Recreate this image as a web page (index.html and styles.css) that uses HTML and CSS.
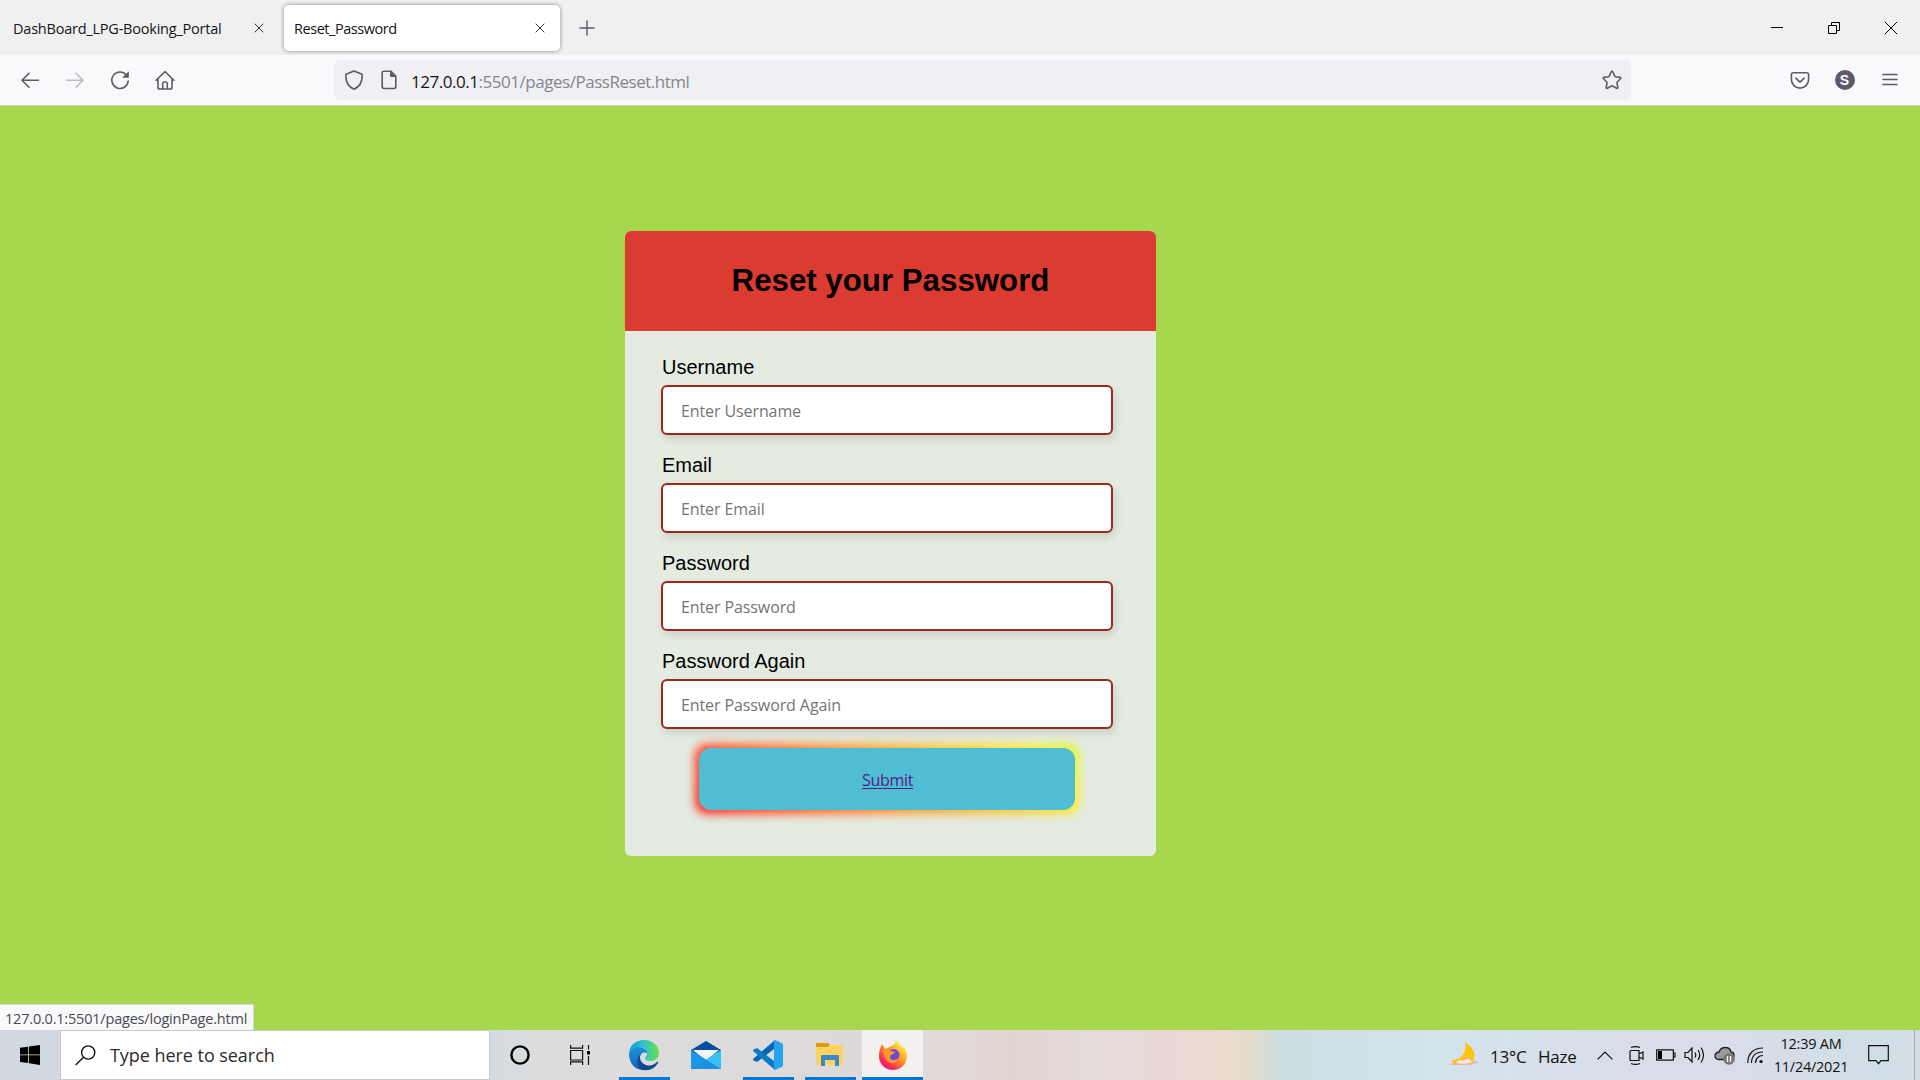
FILE: index.html
```html
<!DOCTYPE html>
<html lang="en">
<head>
<meta charset="utf-8">
<title>Reset_Password</title>
<link rel="stylesheet" href="styles.css">
</head>
<body>
<header class="tabs">
  <div class="tab"><span class="tab-title t1">DashBoard_LPG-Booking_Portal</span><svg class="x" viewBox="0 0 10 10"><path d="M.7.7l8.6 8.6M9.3.7L.7 9.3"/></svg></div>
  <div class="tab active"><span class="tab-title t2">Reset_Password</span><svg class="x" viewBox="0 0 10 10"><path d="M.7.7l8.6 8.6M9.3.7L.7 9.3"/></svg></div>
  <svg class="plus" viewBox="0 0 16 16"><path d="M8 .5v15M.5 8h15"/></svg>
  <div class="window-buttons">
    <svg viewBox="0 0 14 14"><path d="M1 6.500h12"/></svg>
    <svg viewBox="0 0 14 14"><path d="M1.500 4.500h8v8h-8zM4.500 4.500v-3h8v8h-3"/></svg>
    <svg viewBox="0 0 14 14"><path d="M.8.8l12.400 12.400M13.200.8L.8 13.200"/></svg>
  </div>
</header>
<nav class="toolbar">
  <div class="nav-buttons">
    <svg viewBox="0 0 20 20"><path d="M18.500 10.300H2M9 3.300l-7 7 7 7"/></svg>
    <svg class="off" viewBox="0 0 20 20"><path d="M1.500 10.300H18M11 3.300l7 7-7 7"/></svg>
    <svg viewBox="0 0 20 20"><path d="M16.500 5.200A8.200 8.200 0 1 0 18.200 11"/><path class="fill" d="M18.800 1.200v6.600h-6.600z"/></svg>
    <svg viewBox="0 0 20 20"><path d="M1.200 10.200L10 1.500l8.800 8.700M3 9v8.200q0 1.800 1.800 1.800h10.400q1.800 0 1.800-1.800V9M7.700 19v-5.400q0-1.600 1.600-1.600h1.400q1.600 0 1.600 1.600V19"/></svg>
  </div>
  <div class="url-bar">
    <svg class="shield" viewBox="0 0 20 20"><path d="M10 1L18 4.300C18.600 11 16 16.500 10 19.200 4 16.500 1.400 11 2 4.300z"/></svg>
    <svg class="doc" viewBox="0 0 16 20"><path d="M2.800 1.200H10L14.800 6v10.600q0 1.900-1.900 1.900H3.100q-1.900 0-1.900-1.900V3q0-1.800 1.600-1.800z"/><path class="fill" d="M9 1l6 6H10.500Q9 7 9 5.500z"/></svg>
    <span class="url"><b>127.0.0.1</b>:5501/pages/PassReset.html</span>
    <svg class="star" viewBox="0 0 20 20"><path d="M10 1.300q.6 0 .9.700l2 4.300q.2.400.6.500l4.600.6q1.200.3.400 1.300l-3.300 3.300q-.3.300-.2.800l.8 4.600q.1 1.300-1.100.8l-4.200-2.200q-.5-.2-1 0l-4.200 2.200q-1.200.5-1.100-.8l.8-4.600q.1-.5-.2-.8L1.500 8.700q-.8-1 .4-1.300l4.600-.6q.4-.1.600-.500l2-4.300q.3-.7.900-.7z"/></svg>
  </div>
  <div class="tool-buttons">
    <svg viewBox="0 0 20 20"><path d="M3.300 2.800h13.400q1.900 0 1.900 1.900V9.500a8.600 8.600 0 0 1-17.200 0V4.700q0-1.900 1.900-1.900zM5.800 8.200L10 12.200l4.200-4"/></svg>
    <span class="avatar">S</span>
    <svg viewBox="0 0 20 20"><path d="M3 4.500h14M3 9.500h14M3 14.500h14"/></svg>
  </div>
</nav>
<main class="page">
  <form class="card">
    <h1>Reset your Password</h1>
    <div class="fields">
      <label>Username<input type="text" placeholder="Enter Username"></label>
      <label>Email<input type="text" placeholder="Enter Email"></label>
      <label>Password<input type="text" placeholder="Enter Password"></label>
      <label>Password Again<input type="text" placeholder="Enter Password Again"></label>
      <div class="submit"><a href="#">Submit</a></div>
    </div>
  </form>
  <div class="status">127.0.0.1:5501/pages/loginPage.html</div>
</main>
<footer class="taskbar">
  <div class="start"><svg viewBox="0 0 20 20"><path d="M0 2.800L8.200 1.700V9.400H0zM9 1.600L20 0V9.400H9zM0 10.200H8.200V18L0 16.900zM9 10.200H20V20L9 18.200z"/></svg></div>
  <div class="search"><svg viewBox="0 0 21 21"><circle cx="13.200" cy="7.500" r="6.600"/><path d="M8.500 12.200L.7 20"/></svg><span>Type here to search</span></div>
  <div class="apps">
    <div class="app small"><svg width="22" height="22" viewBox="0 0 22 22"><circle cx="11" cy="11" r="8.600" fill="none" stroke="#000" stroke-width="2.400"/></svg></div>
    <div class="app small"><svg width="20" height="20" viewBox="0 0 20 20" fill="none" stroke="#111" stroke-width="1.200"><path d="M.6 5.500h12v9.500H.6zM.6 0v3.200h12V0M.6 20v-3.200h12V20M18.500 0v4.500M18.500 11v9"/><path d="M17 6h3v3.500h-3z" fill="#000" stroke="none"/></svg></div>
    <div class="app open first"><svg width="32" height="32" viewBox="0 0 32 32">
      <defs><linearGradient id="eg" x1="0" x2="1"><stop offset="0" stop-color="#1497dc"/><stop offset=".5" stop-color="#30c6cd"/><stop offset="1" stop-color="#6bdf45"/></linearGradient><linearGradient id="eb" x2="0" y2="1"><stop stop-color="#1b93d8"/><stop offset="1" stop-color="#1362b8"/></linearGradient></defs>
      <path fill="url(#eg)" d="M1 14C2 6 8 1 16 1c9 0 15 6 15 13 0 5-4 8-8 8-4 0-6-1-6-3 0-1 2-2 2-5 0-3-3-6-8-6-5 0-8 2-10 6z"/>
      <path fill="url(#eb)" d="M1 15c1-5 5-7 9-7 6 0 9 3 9 6-4-2-8 1-7 7 1 5 4 8 9 9-10 4-20-3-20-15z"/>
      <path fill="#114a94" d="M13 15c-2 3-1 8 3 10 5 3 10 1 13-2 1-.5 1.500 0 1 1-3 5-8 8-14 7-8-1-9-12-3-16z"/></svg></div>
    <div class="app"><svg width="30" height="28" viewBox="0 0 30 28"><path fill="#064f9e" d="M0 9L15 0l15 9v9H0z"/><path fill="#f4f4f5" d="M2 9h26L15 20z"/><path fill="#1b98e6" d="M0 9l30 19H0z"/><path fill="#38c0f5" d="M30 9v19L15 18.500z"/><path fill="#1f8fe0" d="M15 18.500L30 28H0z"/></svg></div>
    <div class="app open"><svg width="30" height="30" viewBox="0 0 30 30"><path fill="#0068b5" d="M22 0v8.200L4 22 .6 20.500q-1-1 0-2z"/><path fill="#087bc9" d="M22 30v-8.200L4 8 .6 9.500q-1 1 0 2z"/><path fill="#25a4ef" d="M22 0l7 3.200q1 .5 1 1.800v20q0 1.300-1 1.800L22 30q-1-1-1-2V2q0-1 1-2z"/></svg></div>
    <div class="app open"><svg width="28" height="24" viewBox="0 0 28 24"><path fill="#dc9a06" d="M0 1q0-1 1-1h11q1 0 1.500 1.500L13 4H0z"/><path fill="#ffd35f" d="M0 4h12l2-2h12q1 0 1 1v19H0z"/><path fill="#3d88ca" d="M5 23V13q0-1 1-1h16q1 0 1 1v10h-4v-6H9v6z"/></svg></div>
    <div class="app open current"><svg width="30" height="30" viewBox="0 0 30 30">
      <defs><linearGradient id="ff" x1=".85" y1=".1" x2=".2" y2=".9"><stop offset=".1" stop-color="#ffe53f"/><stop offset=".5" stop-color="#ff8a24"/><stop offset=".85" stop-color="#fa2c58"/><stop offset="1" stop-color="#e91d79"/></linearGradient></defs>
      <path fill="url(#ff)" d="M4 4l3 5 3-1c2-2 4-2 4-2l1-2 1 1c1-3 3-4 3-5 1 4 4 5 6 8l1-1c2 3 3 6 3 9 0 8-6 14-14 14S1 24 1 16c0-5 1-8 3-12z"/>
      <circle cx="15.500" cy="15" r="6" fill="#7545d6"/><path fill="#ff9a27" d="M4 11c4-3 8-1 9 0l4 1c-1 2-3 2-4 3-2 2-1 4 1 5 2 1 3-1 6-1-2 5-9 5-12 1-2-3-1-5-4-9z"/></svg></div>
  </div>
  <div class="tray">
    <svg class="moon" viewBox="0 0 30 24"><path fill="#ffc30c" d="M15 0c10 4 13 15 5 21H5q-3-2-3-4C11 17 17 10 15 0z"/><path fill="#e5ba91" d="M0 22q3-3 6-2 2-6 7-3 5-6 10 1h2q2 0 4 2-5 0-6 1-5 2-8 1H0z"/><path fill="#f7e6d3" d="M6 20q2-5 7-2 5-5 9 1-5 3-16 1z"/></svg>
    <span class="weather">13°C</span><span class="weather haze">Haze</span>
    <svg class="chev" viewBox="0 0 16 9"><path d="M.6 8.400L8 1l7.400 7.400"/></svg>
    <svg class="meet" viewBox="0 0 16 19"><path d="M2 4.500h8v10H2q-1 0-1-1v-8q0-1 1-1zM10 8l4-2v7l-4-2M2 1.500Q6.500-.3 11 1.500M2 17.500q4.500 1.800 9 0"/></svg>
    <svg class="battery" viewBox="0 0 20 12"><path d="M.7.8h16.600v10.400H.7zM17.500 4h1.500v4h-1.500"/><path class="solid" d="M2 2h4v8H2z"/></svg>
    <svg class="volume" viewBox="0 0 22 18"><path d="M1 6.500h3l4-4.500v14l-4-4.500H1zM11 6.500q1.500 2.500 0 5M14 4q3.500 5 0 10M17 1.500q5 7.500 0 15"/></svg>
    <svg class="cloud" viewBox="0 0 21 19"><path fill="#9a9a9a" stroke="#222" stroke-width="1.300" d="M4 13.500C-1 12 1 6 5 6 7 0 16 0 17 6c4 0 4 7 0 7.500z"/><circle cx="15" cy="13" r="5.800" fill="#777"/><path stroke="#fff" stroke-width="1.300" d="M13.500 10v6M16.500 10v6"/></svg>
    <svg class="wifi" viewBox="0 0 17 17"><path d="M.8 16C.8 6 7 1 16 1M4.500 16c0-7 4-11 11.500-11M8.500 16c0-4 3-7.500 7.500-7.500"/><circle class="solid" cx="14" cy="14.500" r="1.600"/></svg>
    <div class="clock"><span>12:39 AM</span><span class="date">11/24/2021</span></div>
    <svg class="note" viewBox="0 0 21 20"><path d="M.7.7h19.600v15H13l-2.500 3-2.500-3H.7z"/></svg>
    <i class="desk"></i>
  </div>
</footer>
</body>
</html>
```
FILE: styles.css
```css
* { box-sizing: border-box; }
body { margin: 0; width: 1920px; height: 1080px; overflow: hidden; display: flex; flex-direction: column; font-family: "Open Sans", sans-serif; color: #15141a; }
svg { display: block; flex: none; fill: none; }

.tabs { height: 55px; background: #f0f0f0; display: flex; align-items: center; padding: 0 22px 0 5px; stroke: #222; }
.tab { height: 46px; width: 272px; padding: 0 13px 0 8px; display: flex; align-items: center; justify-content: space-between; font-size: 14.500px; border-radius: 5px; }
.active { width: 276px; margin-left: 7px; padding: 0 15px 0 10px; background: #fff; box-shadow: 0 0 4px rgba(90, 90, 110, .7); }
.tab-title { white-space: nowrap; padding-top: 2px; }
.t1 { letter-spacing: -.22px; }
.t2 { letter-spacing: -.45px; }
.x { width: 10px; height: 10px; stroke: #333; }
.plus { width: 16px; height: 16px; margin-left: 19px; stroke: #5b5b66; stroke-width: 1.400; }
.window-buttons { margin-left: auto; display: flex; gap: 43px; stroke: #000; }
.window-buttons svg { width: 14px; height: 14px; }

.toolbar { height: 51px; background: #f9f9fb; border-bottom: 1px solid #ccccd2; display: flex; align-items: center; padding: 0 8px 0 7px; stroke: #5b5b66; stroke-width: 1.600; }
.nav-buttons, .tool-buttons { display: grid; grid-auto-flow: column; grid-auto-columns: 45px; justify-items: center; align-items: center; }
.nav-buttons svg, .tool-buttons svg { width: 20px; height: 20px; stroke-linejoin: round; stroke-linecap: round; }
.off { stroke: #bcbcc1; }
.fill { fill: #5b5b66; stroke: none; }
.url-bar { width: 1297px; height: 40px; margin-left: 147px; background: #f0f0f4; border-radius: 5px; display: flex; align-items: center; padding: 0 9px 0 10px; }
.shield, .star { width: 20px; height: 20px; stroke-linejoin: round; }
.doc { width: 16px; height: 20px; margin-left: 17px; }
.url { margin-left: 14px; padding-top: 3px; font-size: 17px; letter-spacing: -.47px; color: #85858b; white-space: nowrap; }
.url b { font-weight: 400; color: #15141a; }
.star { margin-left: auto; }
.tool-buttons { margin-left: auto; }
.avatar { width: 20px; height: 20px; border-radius: 50%; background: #5b5b66; color: #fff; font: bold 14px/20px "Liberation Sans", sans-serif; text-align: center; }

.page { flex: 1; background: #a6d74c; position: relative; padding: 125px 0 0 625px; }
.card { width: 531px; height: 625px; background: #e4ebe0; border-radius: 6px; overflow: hidden; font-family: "Liberation Sans", sans-serif; }
.card h1 { margin: 0; height: 100px; background: #dc3b32; color: #000; font-size: 31.250px; line-height: 100px; text-align: center; }
.fields { padding: 23px 43px 0 36px; }
.fields label { display: block; height: 98px; font-size: 20px; line-height: 26px; color: #000; text-indent: 1px; }
.fields input { display: block; width: 452px; height: 50px; margin-top: 5px; padding: 2px 0 0 18px; border: 2px solid #9c2a1c; border-radius: 6px; background: #fff; box-shadow: 2px 4px 8px rgba(0, 0, 0, .12); font: 16px "Open Sans", sans-serif; letter-spacing: -.1px; }
.fields input::placeholder { color: #757575; }
.submit { position: relative; z-index: 0; width: 376px; height: 62px; margin: 2px 0 0 38px; padding: 2px 0 0 1px; border-radius: 12px; display: flex; align-items: center; justify-content: center; font: 16px "Open Sans", sans-serif; letter-spacing: -.3px; }
.submit::before, .submit::after { content: ""; position: absolute; z-index: -1; border-radius: 12px; }
.submit::before { inset: -4px; background: linear-gradient(45deg, #ff2020, #ff9a30 48%, #fff030 88%, #d8ff20); filter: blur(5px); }
.submit::after { inset: 0; background: #4fbed4; }
.submit a { color: #551a8b; text-underline-offset: 2px; }
.status { position: absolute; left: 0; bottom: 0; width: 254px; height: 26px; padding-left: 5px; background: #f9f9fb; border: solid #d6d6d6; border-width: 1px 1px 0 0; color: #4a4a4f; font-size: 14.500px; line-height: 28px; letter-spacing: -.2px; white-space: nowrap; }

.taskbar { height: 50px; flex: none; display: flex; background: linear-gradient(90deg, #d2d8df 0, #d3dbe0 490px, #dddcdc 540px, #ddd9d9 860px, #e2dada 930px, #e1d5d1 1010px, #e5dada 1090px, #e7d8d5 1160px, #eadacf 1230px, #dfdccb 1255px, #cdddde 1280px, #cfdfe6 1330px, #d4e3ea 1440px, #d8dde8 1620px, #d8dde8 1740px, #cfdee5 1890px, #d5dde3 1920px); }
.start { width: 60px; display: grid; place-items: center; }
.start svg { width: 20px; height: 20px; fill: #000; }
.search { width: 430px; background: #fff; border: 1px solid #c9c9c9; display: flex; align-items: center; padding-left: 14px; color: #2b2b2b; font-size: 18px; }
.search svg { width: 21px; height: 21px; stroke: #111; stroke-width: 1.400; }
.search span { margin-left: 14px; letter-spacing: -.05px; white-space: nowrap; }
.apps { display: flex; }
.app { width: 62px; display: grid; place-items: center; position: relative; }
.small { width: 60px; }
.first { margin-left: 3px; }
.open::after { content: ""; position: absolute; left: 6px; right: 5px; bottom: 0; height: 3px; background: #0078d7; }
.current { width: 61px; margin-left: 1px; background: #f3f1f0; }
.current::after { left: 0; right: 0; }
.tray { margin-left: auto; display: flex; align-items: center; stroke: #111; stroke-width: 1.200; white-space: nowrap; }
.moon { width: 30px; height: 24px; stroke: none; }
.weather { width: 48px; margin-left: 10px; padding-top: 2px; font-size: 17px; letter-spacing: -.2px; color: #111; }
.haze { width: 48px; margin-left: 0; }
.chev { width: 16px; height: 9px; margin-left: 11px; }
.meet { width: 16px; height: 19px; margin-left: 16px; }
.battery { width: 20px; height: 12px; margin-left: 11px; }
.volume { width: 22px; height: 18px; margin-left: 8px; }
.cloud { width: 21px; height: 19px; margin-left: 8px; stroke: none; }
.wifi { width: 17px; height: 17px; margin-left: 12px; }
.solid { fill: #000; stroke: none; }
.clock { width: 74px; margin-left: 10px; display: flex; flex-direction: column; align-items: center; font-size: 14.500px; line-height: 23px; letter-spacing: -.25px; color: #111; }
.note { width: 21px; height: 20px; margin-left: 20px; }
.desk { width: 6px; height: 50px; margin-left: 25px; border-left: 1px solid #9fa8ad; }
```
